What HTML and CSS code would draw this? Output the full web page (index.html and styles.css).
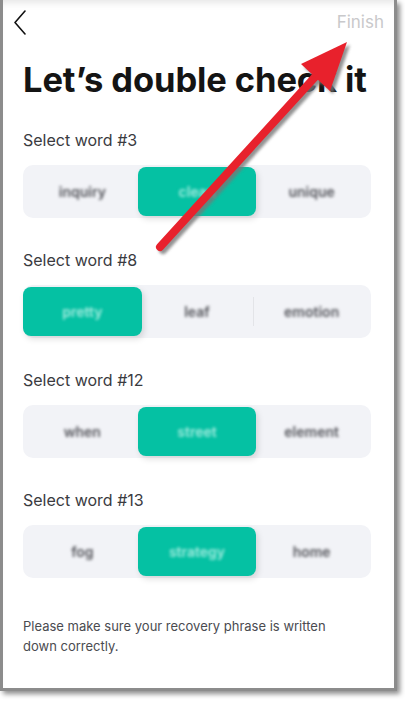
FILE: index.html
```html
<!DOCTYPE html>
<html>
<head>
<meta charset="utf-8">
<link rel="stylesheet" href="styles.css">
</head>
<body>
<div class="phone">
  <header class="nav">
    <svg class="back" width="16" height="26" viewBox="0 0 16 26"><path d="M12 1 L2 12.5 L12 24" fill="none" stroke="#111" stroke-width="1.6" stroke-linecap="round" stroke-linejoin="round"/></svg>
    <span class="finish">Finish</span>
  </header>
  <h1 class="title">Let’s double check it</h1>

  <section class="group">
    <div class="label">Select word #3</div>
    <div class="seg">
      <div class="opt"><span>inquiry</span></div>
      <div class="opt sel"><span>clean</span></div>
      <div class="opt"><span>unique</span></div>
    </div>
  </section>

  <section class="group">
    <div class="label">Select word #8</div>
    <div class="seg">
      <div class="opt sel"><span>pretty</span></div>
      <div class="opt div"><span>leaf</span></div>
      <div class="opt"><span>emotion</span></div>
    </div>
  </section>

  <section class="group">
    <div class="label">Select word #12</div>
    <div class="seg">
      <div class="opt"><span>when</span></div>
      <div class="opt sel"><span>street</span></div>
      <div class="opt"><span>element</span></div>
    </div>
  </section>

  <section class="group">
    <div class="label">Select word #13</div>
    <div class="seg">
      <div class="opt"><span>fog</span></div>
      <div class="opt sel"><span>strategy</span></div>
      <div class="opt"><span>home</span></div>
    </div>
  </section>

  <p class="note">Please make sure your recovery phrase is written down correctly.</p>
</div>

<svg class="arrow" width="405" height="701" viewBox="0 0 405 701">
  <defs>
    <filter id="sh" x="-20%" y="-20%" width="140%" height="140%"><feGaussianBlur stdDeviation="1.6"/></filter>
  </defs>
  <g transform="translate(3,3)" fill="#777" stroke="#777" filter="url(#sh)" opacity="0.8">
    <line x1="160" y1="247" x2="315" y2="77" stroke-width="8" stroke-linecap="round"/>
    <polygon points="347,42 330,91 301,64" stroke="none"/>
  </g>
  <g fill="#e8212c" stroke="#e8212c">
    <line x1="160" y1="247" x2="315" y2="77" stroke-width="8" stroke-linecap="round"/>
    <polygon points="347,42 330,91 301,64" stroke="none"/>
  </g>
</svg>
</body>
</html>
```
FILE: styles.css
```css
html, body {
  margin: 0;
  padding: 0;
  background: #fff;
}
body {
  width: 405px;
  height: 701px;
  position: relative;
  overflow: hidden;
  font-family: Inter, "Liberation Sans", sans-serif;
}
.phone {
  box-sizing: border-box;
  width: 397px;
  height: 691px;
  border-left: 3px solid #8c8c8c;
  border-right: 3px solid #8c8c8c;
  border-bottom: 3px solid #8c8c8c;
  box-shadow: 3px 3px 5px rgba(0,0,0,0.45), inset 0 8px 8px -6px rgba(0,0,0,0.12);
  background: #fff;
  padding: 0 23px 0 20px;
  display: flex;
  flex-direction: column;
}
.nav {
  height: 46px;
  display: flex;
  align-items: center;
  justify-content: space-between;
  margin-left: -10px;
  margin-right: -13px;
}
.back {
  display: block;
}
.finish {
  color: #c9c9cb;
  font-size: 17px;
  margin-top: -3px;
}
.title {
  margin: 12px 0 0 0;
  font-size: 34.5px;
  line-height: 44px;
  font-weight: 700;
  color: #141414;
  letter-spacing: -0.1px;
}
.group {
  display: flex;
  flex-direction: column;
}
.group:first-of-type { margin-top: 28px; }
.label {
  font-size: 16px;
  line-height: 20px;
  color: #3a3b3f;
  margin-bottom: 15px;
}
.seg {
  background: #f2f3f7;
  border-radius: 10px;
  height: 53px;
  padding: 2px;
  box-sizing: border-box;
  display: grid;
  grid-template-columns: 1fr 1fr 1fr;
  margin-bottom: 32px;
}
.opt {
  display: flex;
  align-items: center;
  justify-content: center;
  font-size: 14px;
  font-weight: 600;
  color: #55565c;
  position: relative;
}
.opt span {
  filter: blur(1.4px);
}
.opt.sel {
  background: #05c1a3;
  border-radius: 8px;
  color: #a4ecdf;
  margin: 0 -2px;
  box-shadow: 2px 3px 6px rgba(0,0,0,0.13);
}
.opt.div::after {
  content: "";
  position: absolute;
  right: 0;
  top: 10px;
  bottom: 10px;
  width: 1px;
  background: #e3e4e8;
}
.note {
  margin: 6px 0 0 0;
  font-size: 13px;
  line-height: 20px;
  color: #4a4b50;
  padding-right: 20px;
}
.arrow {
  position: absolute;
  left: 0;
  top: 0;
  pointer-events: none;
}
```
